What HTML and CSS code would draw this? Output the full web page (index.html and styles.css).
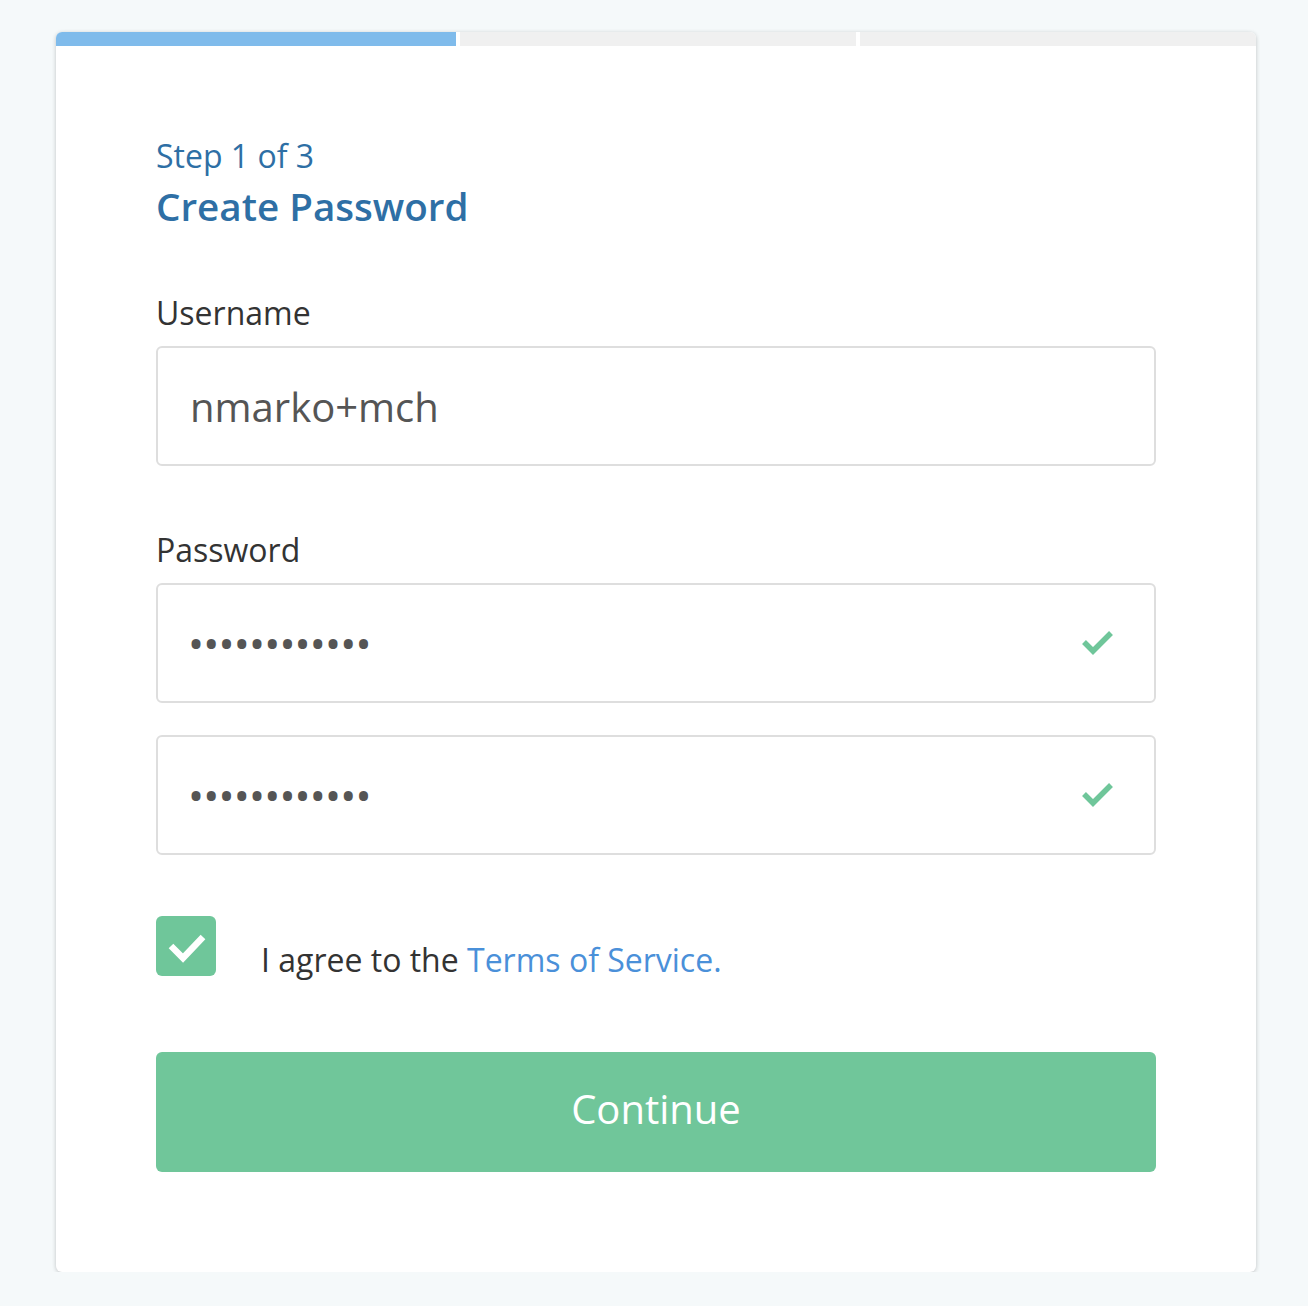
FILE: index.html
```html
<!DOCTYPE html>
<html lang="en">
<head>
<meta charset="utf-8">
<title>Create Password</title>
<link rel="stylesheet" href="styles.css">
</head>
<body>
<div class="card">
  <div class="progress">
    <div class="seg seg-active"></div>
    <div class="seg"></div>
    <div class="seg"></div>
  </div>
  <div class="content">
    <div class="step">Step 1 of 3</div>
    <h1 class="title">Create Password</h1>

    <label class="label label-first" for="username">Username</label>
    <div class="field">
      <input class="input" id="username" type="text" value="nmarko+mch">
    </div>

    <label class="label" for="password">Password</label>
    <div class="field">
      <input class="input input-pass" id="password" type="password" value="abcdefghijkl">
      <svg class="ok" width="34" height="26" viewBox="0 0 34 26"><polyline points="3,12 12,21 30,3" fill="none" stroke="#6fc69a" stroke-width="5.5"/></svg>
    </div>
    <div class="field field-second">
      <input class="input input-pass" type="password" value="abcdefghijkl">
      <svg class="ok" width="34" height="26" viewBox="0 0 34 26"><polyline points="3,12 12,21 30,3" fill="none" stroke="#6fc69a" stroke-width="5.5"/></svg>
    </div>

    <div class="agree">
      <span class="checkbox">
        <svg width="60" height="60" viewBox="0 0 60 60"><polyline points="15,30 27,42 47,21" fill="none" stroke="#ffffff" stroke-width="6.5"/></svg>
      </span>
      <span class="agree-text">I agree to the <a class="link" href="#">Terms of Service.</a></span>
    </div>

    <button class="btn" type="button">Continue</button>
  </div>
</div>
</body>
</html>
```
FILE: styles.css
```css
* { box-sizing: border-box; }
html, body { margin: 0; padding: 0; }
body {
  background: #f5f9fa;
  font-family: "Open Sans", "Liberation Sans", sans-serif;
  color: #333;
  padding: 32px 52px 0 56px;
}
.card {
  width: 1200px;
  background: #fff;
  border-radius: 6px;
  box-shadow: 0 1px 4px rgba(0, 0, 0, 0.22);
  overflow: hidden;
}
.progress {
  display: grid;
  grid-template-columns: 400px 1fr 1fr;
  column-gap: 4px;
  height: 14px;
}
.seg { background: #f0f0f0; }
.seg-active { background: #7fbbeb; }
.content {
  padding: 90px 100px 100px 100px;
  display: flex;
  flex-direction: column;
}
.step {
  font-size: 32px;
  line-height: 40px;
  color: #2e6fa5;
}
.title {
  margin: 6px 0 0 0;
  font-size: 38.6px;
  line-height: 48px;
  font-weight: 600;
  color: #2e6fa5;
}
.label {
  display: block;
  font-size: 32px;
  line-height: 40px;
  color: #333;
  margin-top: 64px;
  margin-bottom: 13px;
}
.label-first { margin-top: 63px; }
.field {
  display: flex;
  align-items: center;
  height: 120px;
  border: 2px solid #dedede;
  border-radius: 6px;
  padding: 0 39px 0 32px;
  background: #fff;
}
.field-second { margin-top: 32px; }
.input {
  flex: 1;
  min-width: 0;
  border: none;
  outline: none;
  padding: 0;
  margin: 0;
  background: transparent;
  font-family: "Open Sans", "Liberation Sans", sans-serif;
  font-size: 40px;
  color: #555;
  height: 60px;
}
.input-pass {
  font-size: 32px;
  font-weight: 700;
  letter-spacing: 3.2px;
  color: #555;
}
.ok { flex: none; display: block; }
.agree {
  display: flex;
  align-items: flex-start;
  margin-top: 61px;
}
.checkbox {
  flex: none;
  width: 60px;
  height: 60px;
  border-radius: 6px;
  background: #6fc69a;
  display: block;
}
.checkbox svg { display: block; }
.agree-text {
  margin-left: 45px;
  padding-top: 24px;
  font-size: 32px;
  line-height: 40px;
  color: #333;
}
.link {
  color: #4a90d9;
  text-decoration: none;
}
.btn {
  margin-top: 72px;
  height: 120px;
  width: 100%;
  border: none;
  border-radius: 6px;
  background: #70c69a;
  color: #fff;
  font-family: "Open Sans", "Liberation Sans", sans-serif;
  font-size: 40px;
  padding: 0 0 8px 0;
  cursor: pointer;
}
```
